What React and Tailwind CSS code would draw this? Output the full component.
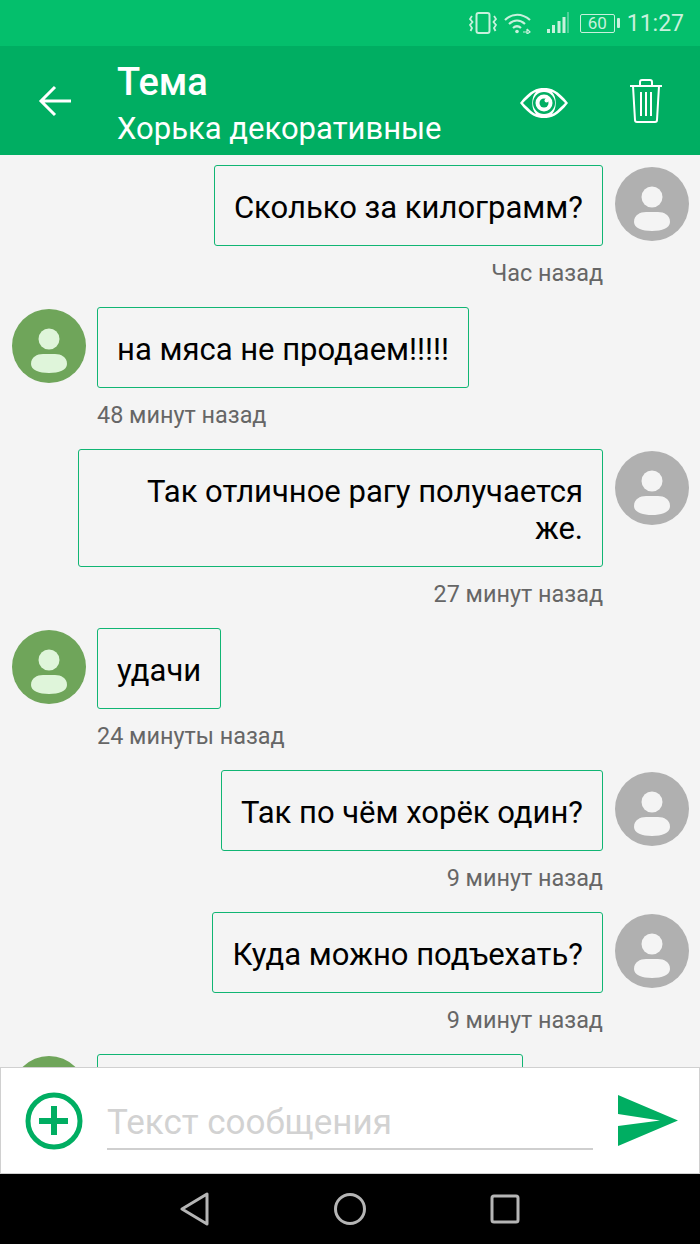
import { Fragment } from "react"

const messages = [
  { id: 1, mine: true, text: "Сколько за килограмм?", time: "Час назад" },
  { id: 2, mine: false, text: "на мяса не продаем!!!!!", time: "48 минут назад" },
  { id: 3, mine: true, text: "Так отличное рагу получается же.", time: "27 минут назад" },
  { id: 4, mine: false, text: "удачи", time: "24 минуты назад" },
  { id: 5, mine: true, text: "Так по чём хорёк один?", time: "9 минут назад" },
  { id: 6, mine: true, text: "Куда можно подъехать?", time: "9 минут назад" },
]

function Avatar({ mine }) {
  const fg = mine ? "#f4f4f4" : "#dff5da"
  return (
    <svg width="74" height="74" viewBox="0 0 74 74" className="shrink-0 mt-[2px]">
      <circle cx="37" cy="37" r="37" fill={mine ? "#b0b0b0" : "#6fa55a"} />
      <circle cx="37" cy="30" r="10.5" fill={fg} />
      <path d="M19 55 C19 48 25 45 31 45 H43 C49 45 55 48 55 55 C55 61 47 64 37 64 C27 64 19 61 19 55 Z" fill={fg} />
    </svg>
  )
}

function Message({ mine, text, time }) {
  const bubble = (
    <div className="min-w-0 flex-1 flex flex-col">
      <div className={mine ? "flex justify-end" : "flex justify-start"}>
        <div
          className={
            "max-w-[525px] border-[1.5px] border-[#10b573] rounded-[3px] px-[19px] pt-[23px] pb-[19px] text-[31px] leading-[37px] text-black " +
            (mine ? "text-right" : "text-left")
          }
        >
          {text}
        </div>
      </div>
      <div
        className={
          "mt-[15px] mb-[21px] text-[23.4px] leading-[25px] text-[#666666] " +
          (mine ? "text-right" : "text-left")
        }
      >
        {time}
      </div>
    </div>
  )

  return (
    <div className="flex items-start pl-[12px] pr-[11px]">
      {mine ? (
        <Fragment>
          {bubble}
          <div className="ml-[12px]">
            <Avatar mine />
          </div>
        </Fragment>
      ) : (
        <Fragment>
          <div className="mr-[11px]">
            <Avatar />
          </div>
          {bubble}
        </Fragment>
      )}
    </div>
  )
}

function StatusIcons() {
  return (
    <div className="flex items-center">
      {/* vibrate */}
      <svg width="28" height="24" viewBox="0 0 28 24" fill="none" stroke="#c8f1dd" strokeWidth="2" className="mr-[7px]">
        <rect x="7.500" y="2" width="13" height="20" rx="2" />
        <path d="M3 5 L1 8 L3.500 11 L1 14 L3 17 L1.500 20" strokeWidth="1.800" />
        <path d="M25 5 L27 8 L24.500 11 L27 14 L25 17 L26.500 20" strokeWidth="1.800" />
      </svg>
      {/* wifi */}
      <svg width="27" height="22" viewBox="0 0 27 22" fill="none" stroke="#c8f1dd" strokeWidth="2.200" className="mr-[16px]">
        <path d="M1 8 C8 1 18 1 26 8" />
        <path d="M5 12 C10 7.500 16 7.500 21 12" />
        <path d="M9 16 C11.500 13.800 14.500 13.800 17 16" />
        <circle cx="13" cy="19.500" r="1.800" fill="#c8f1dd" stroke="none" />
        <path d="M19 20 H23 M23 17 V22 M23 17 L26 20 L23 22" strokeWidth="1.200" />
      </svg>
      {/* signal */}
      <svg width="22" height="22" viewBox="0 0 22 22" className="mr-[11px]">
        <rect x="0" y="17" width="3" height="4" fill="#c8f1dd" />
        <rect x="5" y="13" width="3" height="8" fill="#c8f1dd" />
        <rect x="10.500" y="9" width="3" height="12" fill="#c8f1dd" />
        <rect x="15.500" y="5" width="3" height="16" fill="#c8f1dd" />
        <rect x="20" y="0" width="2" height="21" fill="#4fd199" />
      </svg>
      {/* battery */}
      <div className="flex items-center mr-[7px]">
        <div className="w-[35px] h-[19px] border border-[#c8f1dd] rounded-[2px] flex items-center justify-center text-[17px] leading-none text-[#c8f1dd]">
          60
        </div>
        <div className="ml-[2px] w-[3px] h-[10px] bg-[#c8f1dd] rounded-[1px]" />
      </div>
      <span className="text-[23px] leading-none text-[#c8f1dd]">11:27</span>
    </div>
  )
}

export default function App() {
  return (
    <div className="w-[700px] h-[1244px] flex flex-col overflow-hidden bg-[#f4f4f4] font-['Roboto',sans-serif]">
      {/* status bar */}
      <div className="h-[46px] shrink-0 bg-[#04bf6c] flex items-center justify-end pr-[16px]">
        <StatusIcons />
      </div>

      {/* header */}
      <header className="h-[109px] shrink-0 bg-[#00ae62] flex items-center">
        <svg width="34" height="32" viewBox="0 0 34 32" fill="none" stroke="#ffffff" strokeWidth="3" className="ml-[38px] mt-[1px] shrink-0">
          <path d="M33 16 H3 M17 2 L3 16 L17 30" />
        </svg>
        <div className="ml-[45px] mt-[6px] flex-1 text-white">
          <div className="text-[38px] leading-[44px] font-medium">Тема</div>
          <div className="mt-[7px] text-[31px] leading-[36px]">Хорька декоративные</div>
        </div>
        <svg width="48" height="32" viewBox="0 0 48 32" className="shrink-0 mr-[62px] mt-[5px]">
          <path
            d="M0 16 C10 3 17 1 24 1 C31 1 38 3 48 16 C38 29 31 31 24 31 C17 31 10 29 0 16 Z M3 16 C9 22 13 26 16 27 C11 22 11 10 16 5 C13 6 9 10 3 16 Z M32 5 C37 10 37 22 32 27 C35 26 39 22 45 16 C39 10 35 6 32 5 Z"
            fill="#ffffff"
            fillRule="evenodd"
          />
          <circle cx="24" cy="16" r="11" fill="#00ae62" />
          <circle cx="24" cy="16" r="8.500" fill="#ffffff" />
          <circle cx="24" cy="16" r="4.500" fill="#00ae62" />
          <circle cx="26.500" cy="13.500" r="2" fill="#ffffff" />
        </svg>
        <svg width="32" height="44" viewBox="0 0 32 44" fill="none" stroke="#ffffff" strokeWidth="2" className="shrink-0 mr-[38px]">
          <path d="M0 7 H32" />
          <path d="M10 7 V3 Q10 1 12 1 H20 Q22 1 22 3 V7" />
          <path d="M3 7 L5 41 Q5 43 7 43 H25 Q27 43 27 41 L29 7" />
          <path d="M11 13 V37 M16 13 V37 M21 13 V37" />
        </svg>
      </header>

      {/* messages */}
      <div className="flex-1 min-h-0 overflow-hidden pt-[10px]">
        {messages.map((m) => (
          <Message key={m.id} mine={m.mine} text={m.text} time={m.time} />
        ))}
        <div className="flex items-start pl-[12px] pr-[11px]">
          <div className="mr-[11px]">
            <Avatar />
          </div>
          <div className="w-[426px] h-[81px] border-[1.5px] border-[#10b573] rounded-[3px]" />
        </div>
      </div>

      {/* input */}
      <div className="h-[107px] shrink-0 bg-white border border-[#d0d0d0] flex items-center pl-[24px] pr-[20px]">
        <svg width="58" height="58" viewBox="0 0 58 58" fill="none" stroke="#00ae62" className="shrink-0">
          <circle cx="29" cy="29" r="26" strokeWidth="5" />
          <path d="M14 29 H43 M29 14 V43" strokeWidth="6" />
        </svg>
        <div className="ml-[24px] w-[486px] h-[54px] mt-[4px] border-b-2 border-[#cfcfcf] text-[35px] leading-[54px] text-[#d2d2d2]">
          Текст сообщения
        </div>
        <svg width="60" height="51" viewBox="0 0 60 51" className="shrink-0 ml-[25px]">
          <path d="M0 0 L60 25.500 L0 51 V31 L42 25.500 L0 19 Z" fill="#00ae62" />
        </svg>
      </div>

      {/* nav bar */}
      <div className="h-[70px] shrink-0 bg-black flex items-center justify-center gap-[124px]">
        <svg width="30" height="34" viewBox="0 0 30 34" fill="none" stroke="#b5b5b5" strokeWidth="3" strokeLinejoin="round" className="shrink-0">
          <path d="M2 17 L27 2 V32 Z" />
        </svg>
        <svg width="32" height="32" viewBox="0 0 32 32" fill="none" stroke="#b5b5b5" strokeWidth="3" className="shrink-0">
          <circle cx="16" cy="16" r="14.500" />
        </svg>
        <svg width="30" height="30" viewBox="0 0 30 30" fill="none" stroke="#b5b5b5" strokeWidth="3" className="shrink-0">
          <rect x="2" y="2" width="26" height="26" rx="2" />
        </svg>
      </div>
    </div>
  )
}
